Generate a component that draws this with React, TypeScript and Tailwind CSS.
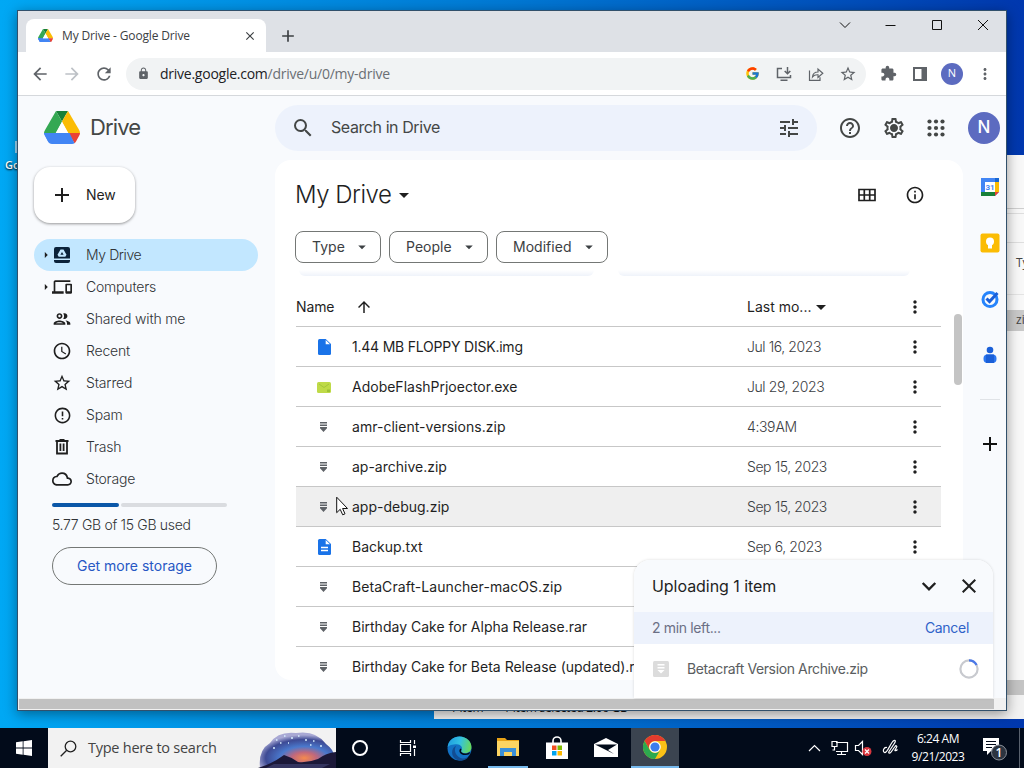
import React from "react";
import {
  MdAccessTime,
  MdAdd,
  MdArrowBack,
  MdArrowDropDown,
  MdArrowForward,
  MdArrowRight,
  MdArrowUpward,
  MdClose,
  MdDevices,
  MdErrorOutline,
  MdExtension,
  MdHelpOutline,
  MdInfoOutline,
  MdLock,
  MdMoreVert,
  MdOutlineCloud,
  MdOutlinePeople,
  MdRefresh,
  MdSearch,
  MdStarBorder,
  MdTune,
  MdOutlineSettings,
} from "react-icons/md";
import { FcGoogle } from "react-icons/fc";

const DriveLogo = ({ size }: { size: number }) => (
  <svg width={size} height={size * 0.92} viewBox="0 0 36 33">
    <path d="M12 0h12l-6 10.5z" fill="#188038" />
    <path d="M12 0 1.2 18.6Q0 20.5 0 22h12l6-11.5z" fill="#34a853" />
    <path d="M24 0 35 18.6Q36 20.5 36 22H24l-6-11.5z" fill="#fbbc04" />
    <path d="M0 22h12L6.5 32.2Q5 31.5 4 30z" fill="#1967d2" />
    <path d="M24 22h12q0 1.500-1 3l-3 5.500q-.7 1.200-1.500 1.700z" fill="#ea4335" />
    <path d="M0 22h25.5l5 10.200Q29.500 33 28 33H8q-1.500 0-2.500-.8-1-.7-1.500-1.700L1 25q-1-1.500-1-3z" fill="#4285f4" />
    <path d="m18 11 6.300 11H11.700z" fill="#fff" />
  </svg>
);

const MyDriveIcon = () => (
  <svg width="18" height="18" viewBox="0 0 18 18" fill="#0b2239">
    <path
      fillRule="evenodd"
      d="M3 1h12a2 2 0 0 1 2 2v9.500H1V3a2 2 0 0 1 2-2zm4.500 2.500L4.500 8.700l1.200 2h6.600l1.200-2-3-5.200zM9 5.900l1.600 2.800H7.400z"
    />
    <path d="M1 14h16v1a2 2 0 0 1-2 2H3a2 2 0 0 1-2-2z" />
  </svg>
);

const TrashIcon = () => (
  <svg width="18" height="18" viewBox="0 0 18 18" fill="none" stroke="#1f1f1f" strokeWidth="1.8">
    <path d="M2.500 3h13M6.500 2h5M4 3v12.500h10V3M7.400 5.500v7.500M10.600 5.500v7.500" />
  </svg>
);

const SettingsIcon = () => (
  <svg width="24" height="24" viewBox="0 0 24 24" className="ml-5">
    <MdOutlineSettings size={24} />
    <circle cx="12" cy="12" r="3" fill="currentColor" />
  </svg>
);

const AppsIcon = () => (
  <svg width="18" height="18" viewBox="0 0 18 18" className="ml-[21px] mr-[3px]" fill="#444746">
    {[2.5, 9, 15.5].map((y) => [2.5, 9, 15.5].map((x) => <circle key={x + "-" + y} cx={x} cy={y} r="2.1" />))}
  </svg>
);

const ZipIcon = () => (
  <svg width="16" height="16" viewBox="0 0 16 16" fill="#5f6368">
    <path d="M4 3h7v1.400H4zM4 5.400h7v1.500H4zM4 8h7v1.300L7.500 13 4 9.300z" />
  </svg>
);

const FileIcon = ({ lines }: { lines?: boolean }) => (
  <svg width="16" height="18" viewBox="0 0 16 18">
    <path d="M3.500 1h6.200L15 6v9.500a1.500 1.500 0 0 1-1.500 1.500h-10A1.500 1.500 0 0 1 2 15.500v-13A1.500 1.500 0 0 1 3.500 1z" fill="#1a73e8" />
    <path d="M9.700 2v4.200H14z" fill="#fff" />
    {lines && <path d="M5 9.500h7M5 12.500h7" stroke="#fff" strokeWidth="1.4" />}
  </svg>
);

const ExeIcon = () => (
  <svg width="16" height="16" viewBox="0 0 16 16">
    <rect x="1" y="3" width="14" height="11" rx="1.5" fill="#bfda48" />
    <path d="m3 5 5 3.500L13 5" stroke="#a3c73a" fill="none" />
    <path d="M11 10.500h3v2.500h-3z" fill="#9cc235" />
  </svg>
);

const nav = [
  { label: "My Drive", icon: <MyDriveIcon />, active: true, arrow: true, track: "tracking-[-0.4px]" },
  { label: "Computers", icon: <MdDevices size={20} />, arrow: true, track: "tracking-[-0.2px]" },
  { label: "Shared with me", icon: <MdOutlinePeople size={22} />, track: "tracking-[-0.15px]" },
  { label: "Recent", icon: <MdAccessTime size={20} />, track: "tracking-[-0.2px]" },
  { label: "Starred", icon: <MdStarBorder size={20} />, track: "tracking-[-0.15px]" },
  { label: "Spam", icon: <MdErrorOutline size={19} />, track: "tracking-[-0.2px]" },
  { label: "Trash", icon: <TrashIcon />, track: "tracking-[-0.2px]" },
  { label: "Storage", icon: <MdOutlineCloud size={20} />, track: "tracking-[-0.2px]" },
];

const files = [
  { name: "1.44 MB FLOPPY DISK.img", date: "Jul 16, 2023", icon: <FileIcon />, track: "tracking-[-0.22px]" },
  { name: "AdobeFlashPrjoector.exe", date: "Jul 29, 2023", icon: <ExeIcon /> },
  { name: "amr-client-versions.zip", date: "4:39 AM", icon: <ZipIcon />, track: "tracking-[0.03px]" },
  { name: "ap-archive.zip", date: "Sep 15, 2023", icon: <ZipIcon /> },
  { name: "app-debug.zip", date: "Sep 15, 2023", icon: <ZipIcon />, hover: true },
  { name: "Backup.txt", date: "Sep 6, 2023", icon: <FileIcon lines /> },
  { name: "BetaCraft-Launcher-macOS.zip", date: "", icon: <ZipIcon />, track: "tracking-[0.07px]" },
  { name: "Birthday Cake for Alpha Release.rar", date: "", icon: <ZipIcon /> },
  { name: "Birthday Cake for Beta Release (updated).rar", date: "", icon: <ZipIcon /> },
];

function TabStrip() {
  return (
    <div className="h-[41px] bg-[#dee1e6] flex items-start shrink-0 font-['Open_Sans',sans-serif]">
      <div className="mt-2 ml-2 w-[240px] h-[33px] bg-white rounded-t-lg flex items-center pl-3">
        <DriveLogo size={15} />
        <span className="ml-[9px] text-[12px] text-[#3c4043] tracking-[-0.15px] whitespace-nowrap">My Drive - Google Drive</span>
        <MdClose size={14} className="ml-auto mr-[9px] text-[#3c4043]" />
      </div>
      <MdAdd size={20} className="mt-[15px] ml-3 text-[#3c4043]" />
      <svg className="ml-auto mr-4" width="152" height="30" viewBox="0 0 152 30" fill="none" stroke="#111">
        <path d="m2 11.500 5 5 5-5M47.500 14.500h10M94.500 9.500h9v9h-9zM140 9l10 10M150 9l-10 10" />
      </svg>
    </div>
  );
}

function Toolbar() {
  return (
    <div className="h-[44px] bg-white border-b border-[#d5d8dc] flex items-center shrink-0 text-[#5f6368] font-['Open_Sans',sans-serif]">
      <MdArrowBack size={20} className="ml-3" />
      <MdArrowForward size={20} className="ml-3 text-[#bdc1c6]" />
      <MdRefresh size={20} className="ml-3" />
      <div className="ml-3 w-[740px] h-8 rounded-full bg-[#f1f3f4] flex items-center pl-[11px] pr-[9px]">
        <MdLock size={13} />
        <span className="ml-[10px] text-[14px] tracking-[-0.25px] text-[#6b6f74] whitespace-nowrap">
          <span className="text-[#202124]">drive.google.com</span>/drive/u/0/my-drive
        </span>
        <FcGoogle size={15} className="ml-auto" />
        <svg className="ml-[16px]" width="16" height="16" viewBox="0 0 16 16" fill="none" stroke="#5f6368" strokeWidth="1.5">
          <path d="M6 2.500H1.500v9h13V9M4.500 14.200h7M11.500 1v6.500M8.700 5l2.800 2.800L14.300 5" />
        </svg>
        <svg className="ml-4" width="16" height="16" viewBox="0 0 16 16" fill="none" stroke="#5f6368" strokeWidth="1.2">
          <path d="M1.500 4.500v9.800h10.500v-3M4.500 11q.5-5 5.500-5V3l4.800 4.300L10 11.500V8.800Q6.500 8.500 4.500 11z" />
        </svg>
        <MdStarBorder size={18} className="ml-[15px]" />
      </div>
      <MdExtension size={17} className="ml-[14px]" />
      <svg className="ml-[15px]" width="16" height="16" viewBox="0 0 16 16">
        <path fill="#5f6368" fillRule="evenodd" d="M1 1h14v14H1zm2 2v10h6.500V3z" />
      </svg>
      <div className="ml-[13px] size-[22px] rounded-full bg-[#5c6bc0] text-white text-[11px] flex items-center justify-center">N</div>
      <MdMoreVert size={18} className="ml-[13px]" />
    </div>
  );
}

function Header() {
  return (
    <div className="h-16 flex items-center shrink-0 text-[#444746]">
      <div className="w-[257px] pl-[26px] flex items-center">
        <DriveLogo size={36} />
        <span className="ml-[10px] text-[22px] tracking-[-0.9px]">Drive</span>
      </div>
      <div className="w-[542px] h-[46px] rounded-full bg-[#edf2fc] flex items-center pl-4 pr-4">
        <MdSearch size={24} />
        <span className="ml-4 pb-0.5 text-[16px] tracking-[-0.42px]">Search in Drive</span>
        <MdTune size={24} className="ml-auto" />
      </div>
      <MdHelpOutline size={24} className="ml-[21px]" />
      <SettingsIcon />
      <AppsIcon />
      <div className="ml-5 size-8 rounded-full bg-[#5c6bc0] text-white text-[17px] font-medium flex items-center justify-center">N</div>
    </div>
  );
}

function Sidebar() {
  return (
    <div className="w-[257px] pl-4 pt-[7px] shrink-0">
      <div className="w-[101px] h-14 rounded-2xl bg-white shadow-[0_1px_3px_rgba(0,0,0,0.4)] flex items-center pl-4">
        <MdAdd size={24} className="text-[#1f1f1f]" />
        <span className="ml-3 pb-px text-[14px] tracking-[-0.1px] text-[#1f1f1f]">New</span>
      </div>
      <div className="mt-4 w-[224px]">
        {nav.map((n) => (
          <div key={n.label} className={"h-8 rounded-full flex items-center text-[14px] " + (n.active ? "bg-[#c2e7ff]" : "")}>
            <span className="w-[18px] flex justify-end text-[#1f1f1f]">{n.arrow && <MdArrowRight size={14} className="-mr-px" />}</span>
            <span className="w-5 flex justify-center text-[#1f1f1f]">{n.icon}</span>
            <span className={"ml-[14px] pb-0.5 text-[#303336] font-light " + n.track}>{n.label}</span>
          </div>
        ))}
      </div>
      <div className="ml-[18px] mt-2 w-[175px] h-1 flex gap-0.5">
        <div className="w-[67px] bg-[#0b57a8] rounded-full" />
        <div className="flex-1 bg-[#dadce0] rounded-full" />
      </div>
      <div className="ml-[18px] mt-2 text-[14px] leading-5 tracking-[-0.32px] font-light text-[#303336]">5.77 GB of 15 GB used</div>
      <div className="ml-[18px] mt-3 w-[165px] h-[38px] rounded-full border border-[#747775] flex items-center justify-center pb-px text-[14px] text-[#2757c4]">
        Get more storage
      </div>
    </div>
  );
}

const Chip = ({ label, width }: { label: string; width: string }) => (
  <div className={"h-8 rounded-lg border border-[#747775] flex items-center pl-4 text-[14px] tracking-[0.03px] text-[#3c4043] " + width}>
    <span className="pb-px">{label}</span>
    <MdArrowDropDown size={18} className="ml-auto mr-[9px]" />
  </div>
);

function FileList() {
  return (
    <div className="w-[688px] h-[520px] bg-white rounded-2xl overflow-hidden relative shrink-0">
      <div className="pl-5 pr-9 pt-[17px] flex items-center h-[53px] text-[#1f1f1f]">
        <span className="text-[24px] leading-9 tracking-[-0.5px] font-light">My Drive</span>
        <MdArrowDropDown size={24} className="ml-px" />
        <svg className="ml-auto" width="18" height="14" viewBox="0 0 18 14" fill="none" stroke="#1f1f1f" strokeWidth="1.7">
          <path d="M1 1.500h16v11H1zM1 7h16M6.300 1v12M11.700 1v12" />
        </svg>
        <MdInfoOutline size={20} className="ml-[29px] mr-[2px]" />
      </div>
      <div className="flex gap-2 pl-5 mt-[18px]">
        <Chip label="Type" width="w-[86px]" />
        <Chip label="People" width="w-[99px]" />
        <Chip label="Modified" width="w-[112px]" />
      </div>
      <div className="flex gap-6 pl-6 mt-[7px] h-[6px]">
        <div className="w-[295px] bg-linear-to-b from-white to-[#eff3fa] rounded-b-lg" />
        <div className="w-[292px] bg-linear-to-b from-white to-[#eff3fa] rounded-b-lg" />
      </div>
      <div className="ml-[21px] mt-[11px] w-[645px] h-10 border-b border-[#c7c7c7] flex items-center text-[14px] text-[#1f1f1f]">
        <span className="w-[59px] tracking-[-0.1px]">Name</span>
        <MdArrowUpward size={18} />
        <span className="ml-[374px] w-[63px] whitespace-nowrap">Last mo...</span>
        <MdArrowDropDown size={24} className="-ml-px" />
        <MdMoreVert size={20} className="ml-auto mr-4" />
      </div>
      {files.map((f) => (
        <div key={f.name} className={"ml-[21px] w-[645px] h-10 border-b border-[#c7c7c7] flex items-center text-[14px] " + (f.hover ? "bg-[#efefef]" : "")}>
          <span className="w-4 ml-5 flex justify-center">{f.icon}</span>
          <span className={"ml-5 w-[395px] whitespace-nowrap text-[#1f1f1f] " + (f.track ?? "")}>{f.name}</span>
          <span
            className={
              "whitespace-nowrap text-[#3c4043] font-light tracking-[-0.42px] " + (f.date.endsWith("AM") ? "[word-spacing:-3px]" : "")
            }
          >
            {f.date}
          </span>
          <MdMoreVert size={20} className="ml-auto mr-4 text-[#1f1f1f]" />
        </div>
      ))}
      <div className="absolute right-[1px] top-[154px] w-2 h-[71px] rounded-sm bg-[#c4c4c4]" />
    </div>
  );
}

function Rail() {
  return (
    <div className="flex-1 flex flex-col items-center pl-[11px]">
      <div className="h-[54px] mb-px flex items-center">
        <svg width="20" height="20" viewBox="0 0 20 20">
          <path d="M1 1h18v14l-4 4H1z" fill="#4285f4" />
          <path d="M15 5h4v10h-4z" fill="#fbbc04" />
          <path d="M1 15h14v4H1z" fill="#188038" />
          <path d="M15 15h4l-4 4z" fill="#ea4335" />
          <path d="M15 1h4v4h-4z" fill="#1967d2" />
          <path d="M5 5h10v10H5z" fill="#fff" />
          <text x="10" y="13" fontSize="8" fontWeight="700" textAnchor="middle" fill="#4285f4" fontFamily="Roboto">31</text>
        </svg>
      </div>
      <div className="h-14 flex items-center">
        <svg width="20" height="20" viewBox="0 0 20 20">
          <rect x="0.5" y="0.5" width="19" height="19" rx="2" fill="#fbbc04" />
          <circle cx="10" cy="8.5" r="4" fill="#fff" />
          <path d="M8 12h4v3.500H8z" fill="#fff" />
        </svg>
      </div>
      <div className="h-14 flex items-center">
        <svg width="20" height="20" viewBox="0 0 20 20" fill="none">
          <circle cx="10" cy="10.5" r="7" stroke="#2684fc" strokeWidth="3" />
          <path d="m6.500 9.500 3 3 8-8.500" stroke="#1a5fd8" strokeWidth="3" />
        </svg>
      </div>
      <div className="h-14 flex items-center">
        <svg width="20" height="20" viewBox="0 0 20 20">
          <circle cx="10" cy="5" r="3.3" fill="#1a5fd8" />
          <rect x="3.5" y="9.5" width="13" height="8.5" rx="4" fill="#2a76f0" />
          <path d="M6 9.500h8v8.500H6z" fill="#1a5fd8" />
        </svg>
      </div>
      <div className="mt-4 w-5 h-px bg-[#e0e3e7]" />
      <MdAdd size={24} className="mt-8 text-[#111]" />
    </div>
  );
}

function UploadPanel() {
  return (
    <div className="absolute left-[616px] top-[464px] w-[359px] h-[138px] bg-white rounded-t-2xl overflow-hidden shadow-[0_0_3px_rgba(0,0,0,0.15)]">
      <div className="h-[52px] bg-[#f8fafd] flex items-center pl-[18px] text-[#1f1f1f]">
        <span className="pb-px text-[16px] tracking-[-0.05px]">Uploading 1 item</span>
        <svg className="ml-auto" width="24" height="24" viewBox="0 0 24 24" fill="none" stroke="currentColor" strokeWidth="2.4">
          <path d="m5.700 9 6.300 6.300L18.300 9" />
        </svg>
        <MdClose size={24} className="ml-4 mr-3" />
      </div>
      <div className="h-8 bg-[#edf2fc] flex items-center justify-between pl-[18px] pr-6 pb-px text-[14px]">
        <span className="text-[#6b6f85] tracking-[-0.35px]">2 min left...</span>
        <span className="text-[#2f62c9] tracking-[-0.3px]">Cancel</span>
      </div>
      <div className="h-[50px] flex items-center pl-[19px] pr-[14px] text-[14px]">
        <svg width="16" height="16" viewBox="0 0 16 16">
          <rect width="16" height="16" rx="1.5" fill="#dcdcdc" />
          <path d="M4.500 3h7v1.600h-7zM4.500 6h7v1.600h-7zM4.500 9h7L8 12.500z" fill="#fff" />
        </svg>
        <span className="ml-[18px] pb-px text-[#5a5d60] tracking-[-0.38px]">Betacraft Version Archive.zip</span>
        <svg className="ml-auto" width="20" height="20" viewBox="0 0 20 20" fill="none" strokeWidth="2.2">
          <circle cx="10" cy="10" r="8.6" stroke="#c8cacf" />
          <path d="M10 1.400a8.600 8.600 0 0 1 7.600 4.600" stroke="#4a78e8" />
        </svg>
      </div>
    </div>
  );
}

function ExplorerWindow() {
  return (
    <div className="absolute left-[434px] top-[155px] w-[620px] h-[564px] bg-[#f2f2f2] font-['Open_Sans',sans-serif] text-[12px] text-[#444]">
      <div className="ml-[573px] w-[47px] h-[540px] bg-[#f8f8f8]">
        <div className="h-[54px] border-b border-[#cfcfcf]" />
        <div className="h-[5px] border-b border-[#dedede]" />
        <div className="h-[29px] border-b border-[#dedede]" />
        <div className="h-[52px] border-b border-[#e4e4e4] pl-[9px] pt-[11px]">Type</div>
        <div className="mt-[15px] h-[21px] bg-[#c9c9c9] pl-[9px] leading-5">zip</div>
        <div className="mt-[349px] h-[15px] bg-[#c4c4c4]" />
      </div>
      <div className="flex h-6 items-center pl-4 pt-0.5 gap-5 tracking-[-0.3px] text-[#111]">
        <span>1 item</span>
        <span>1 item selected  2.06 GB</span>
      </div>
    </div>
  );
}

function Taskbar() {
  return (
    <div className="absolute left-0 top-[728px] w-full h-10 bg-[#020b1a] flex items-center text-white font-['Open_Sans',sans-serif]">
      <div className="w-12 flex justify-center">
        <svg width="16" height="16" viewBox="0 0 16 16" fill="#fff">
          <path d="M0 2.200 6.700 1.300v6.300H0zM7.500 1.200 16 0v7.600H7.500zM0 8.400h6.700v6.300L0 13.800zM7.500 8.400H16V16l-8.500-1.200z" />
        </svg>
      </div>
      <div className="w-[288px] h-10 bg-[#f2f2f2] flex items-center pl-3 overflow-hidden">
        <svg width="17" height="17" viewBox="0 0 17 17" fill="none" stroke="#222" strokeWidth="1.3">
          <circle cx="10.5" cy="6.5" r="5.3" />
          <path d="m6.700 10.300-6 6" />
        </svg>
        <span className="ml-[11px] text-[14.5px] text-[#444] tracking-[-0.25px] whitespace-nowrap">Type here to search</span>
        <svg className="ml-auto" width="78" height="40" viewBox="0 0 78 40">
          <defs>
            <radialGradient id="sky" cx="0.6" cy="0.72" r="0.65">
              <stop offset="0" stopColor="#f58a4e" />
              <stop offset="0.25" stopColor="#c0687c" />
              <stop offset="0.5" stopColor="#4a78cc" />
              <stop offset="0.8" stopColor="#3d4a94" />
              <stop offset="1" stopColor="#a9a9d4" />
            </radialGradient>
          </defs>
          <path d="M2 40Q0 22 12 15 20 3 38 5 58 2 68 16q8 6 8 12v12z" fill="url(#sky)" />
          <path d="M18 12h1.500M26 8h1.500M33 10h2M40 8h1.500M47 12h2M55 13h1.500M62 18h2M15 20h2M22 15h1.500M30 15h1M52 17h1.500" stroke="#d8efff" strokeWidth="1.5" />
          <path d="M0 40q14-4 26-13 7 2 14 7 10 1 20-3 8-6 18-7v16z" fill="#1b1838" />
          <path d="M16 36h56l-8 4H8z" fill="#34345f" />
        </svg>
      </div>
      <div className="w-12 flex justify-center">
        <svg width="18" height="18" viewBox="0 0 18 18" fill="none" stroke="#fff" strokeWidth="2">
          <circle cx="9" cy="9" r="7" />
        </svg>
      </div>
      <div className="w-[47px] flex justify-center">
        <svg width="18" height="18" viewBox="0 0 18 18" fill="none" stroke="#fff" strokeWidth="1.2">
          <path d="M1.500 1v2.500h10V1M1.500 5.500h10v7h-10zM1.500 17v-2.500h10V17M15.500 1v4M15.500 10v7" />
          <path d="M14 6.500h3v2.500h-3z" fill="#fff" stroke="none" />
        </svg>
      </div>
      <div className="w-[57px] flex justify-center">
        <svg width="25" height="25" viewBox="0 0 24 24">
          <defs>
            <linearGradient id="edgeTop" x1="0" x2="1" y1="0.3" y2="0.5">
              <stop offset="0" stopColor="#1f9de0" />
              <stop offset="0.5" stopColor="#33c1e3" />
              <stop offset="1" stopColor="#68d95a" />
            </linearGradient>
          </defs>
          <circle cx="12" cy="12" r="11.5" fill="#1271c4" />
          <path d="M.6 11C1 4.500 6 .5 12 .5c7 0 11.500 5 11.500 10 0 4-3 6-6.500 6-3 0-4-1.500-3-3 1.500-2.500-1-5.500-4.500-5.500C5 8 1.500 9 .6 11z" fill="url(#edgeTop)" />
          <path d="M9 9c-3 4-1 10 4 12 3 1.200 6 .5 8-1.500-3 5-8 4.800-12 3C3 19.500 4 11 9 9z" fill="#124d93" />
          <path d="M13.500 14c-.5 2 2.500 3.500 6 2.500 1.800-.5 3-1.500 3-1.500l-1.200 2.500c-3 1.500-8.500 1-9.300-2.500-.3-1.500.3-2.500 1-3 1 .5 1 1 .5 2z" fill="#020b1a" />
        </svg>
      </div>
      <div className="w-10 h-10 border-b-2 border-[#76b9ed] flex justify-center items-center">
        <svg width="22" height="20" viewBox="0 0 22 20">
          <path d="M0 1h8l2 2h12v4H0z" fill="#e8a317" />
          <path d="M0 4h22v15H0z" fill="#fcd462" />
          <path d="M3 11h16v8h-4v-4H7v4H3z" fill="#3a8fd8" />
        </svg>
      </div>
      <div className="w-[57px] flex justify-center">
        <svg width="24" height="24" viewBox="0 0 24 24">
          <path d="M8 8V5a4 4 0 0 1 8 0v3" fill="none" stroke="#fff" strokeWidth="1.6" />
          <path d="M1 6.500h22V23H1z" fill="#fff" />
          <path d="M7 9.500h4.500V14H7z" fill="#f25022" />
          <path d="M12.500 9.500H17V14h-4.500z" fill="#7fba00" />
          <path d="M7 15h4.500v4.500H7z" fill="#00a4ef" />
          <path d="M12.500 15H17v4.500h-4.500z" fill="#ffb900" />
        </svg>
      </div>
      <div className="w-[41px] flex justify-center">
        <svg width="24" height="20" viewBox="0 0 24 20">
          <path d="M0 6 12 0l12 6v13H0z" fill="#fff" />
          <path d="M1 6.500h22l-9 5.500 6 4z" fill="#020b1a" />
        </svg>
      </div>
      <div className="ml-[5px] w-12 h-10 bg-[#3b4450] border-b-2 border-[#76b9ed] flex justify-center items-center">
        <svg width="24" height="24" viewBox="0 0 24 24">
          <circle cx="12" cy="12" r="12" fill="#fbc116" />
          <path d="M1.600 6A12 12 0 0 1 22.400 6H12a6 6 0 0 0-5.200 9z" fill="#e33b2e" />
          <path d="M1.600 6A12 12 0 0 0 12 24l5.200-9A6 6 0 0 1 6.800 15z" fill="#2da94f" />
          <circle cx="12" cy="12" r="5.8" fill="#fff" />
          <circle cx="12" cy="12" r="4.6" fill="#3b7ded" />
        </svg>
      </div>
      <svg className="ml-auto" width="92" height="20" viewBox="0 0 92 20" fill="none" stroke="#fff" strokeWidth="1.2">
        <path d="m1 13 5.500-5.500L12 13" />
        <path d="M28 4.500h11.500v9H28M24 3.500h5v5h-5zM26.500 8.500v3.500h-2M33.500 13.500v3M29 16.500h9" />
        <path d="M47.500 7.500h3l4-4v13l-4-4h-3z" />
        <circle cx="59" cy="13.5" r="4.5" fill="#d9363e" stroke="none" />
        <path d="m57 11.500 4 4M61 11.500l-4 4" />
        <path d="M80 10c-3-1-5 4-2.500 5S82 9 85 5s4.500-2 2 1.500L82 14c-1 2 1 2.500 2.500 0L88 9c1-1.500 2.500-.5 1.500 1l-1.500 2.500c-.5 1 1 1 2.500-.5" transform="translate(-1 -.5)" />
      </svg>
      <div className="ml-[10px] w-[56px] text-[12px] leading-[18px] text-center tracking-[-0.45px] whitespace-nowrap flex flex-col items-center">
        <span>6:24 AM</span>
        <span>9/21/2023</span>
      </div>
      <svg className="ml-4 mr-[11px]" width="26" height="26" viewBox="0 0 26 26">
        <path d="M1 3h16v13H9l-4 4v-4H1z" fill="#fff" />
        <path d="M4 6.500h10M4 9.500h10M4 12.500h6" stroke="#020b1a" strokeWidth="1.2" />
        <circle cx="17" cy="17.5" r="7.5" fill="#2c3440" stroke="#8a9099" />
        <text x="17" y="22" fontSize="12" fontWeight="600" textAnchor="middle" fill="#fff" fontFamily="Open Sans">1</text>
      </svg>
      <div className="w-px h-10 mr-1 bg-[#59616d]" />
    </div>
  );
}

export default function App() {
  return (
    <div className="relative w-[1024px] h-[768px] overflow-hidden bg-linear-to-r from-[#00a8f4] via-[#0078d4] to-[#0037ae] font-[Inter,sans-serif]">
      <div className="absolute left-[15px] top-[141px] w-3 h-3 bg-[#9fd8f5]" />
      <div className="absolute left-[5px] top-[157px] text-[11px] font-semibold text-white font-['Open_Sans',sans-serif] [text-shadow:0_1px_2px_#000]">Go</div>
      <ExplorerWindow />
      <div className="absolute left-[17px] top-[10px] w-[990px] h-[701px] border border-[#31506b] shadow-[0_3px_12px_rgba(0,0,0,0.4)] flex flex-col bg-[#f8fafd]">
        <TabStrip />
        <Toolbar />
        <div className="h-[602px] relative flex flex-col">
          <Header />
          <div className="flex flex-1">
            <Sidebar />
            <FileList />
            <Rail />
          </div>
          <UploadPanel />
        </div>
        <div className="h-3 bg-[#f1f1f1] p-px pr-3">
          <div className="h-full bg-[#c1c1c1]" />
        </div>
      </div>
      <svg className="absolute left-[336px] top-[496px]" width="13" height="21" viewBox="0 0 13 21">
        <path d="M.7 1.200v15.500l3.500-3.400 2.500 5.500 2.300-1-2.400-5.300h4.900z" fill="#fff" stroke="#111" />
      </svg>
      <Taskbar />
    </div>
  );
}
